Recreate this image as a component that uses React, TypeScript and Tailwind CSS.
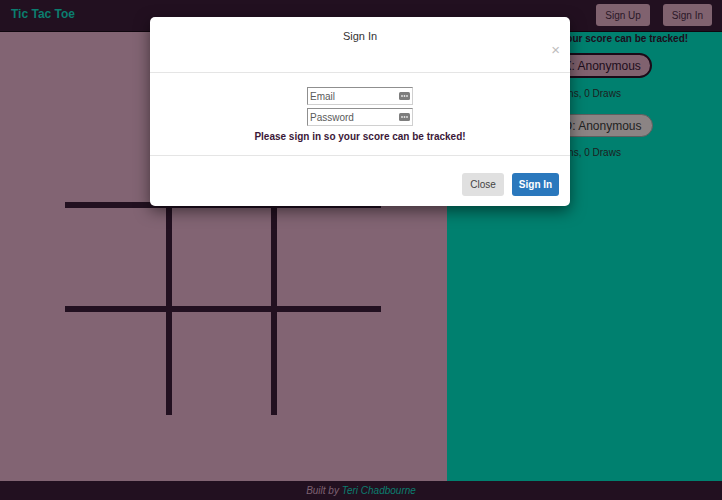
import React from 'react';

const FONT = "font-['Liberation_Sans',Arial,Helvetica,sans-serif]";

function KeyIcon() {
  return (
    <svg width="11" height="8" viewBox="0 0 11 8" aria-hidden="true">
      <rect x="0" y="0" width="11" height="8" rx="1.5" fill="#7d7d7d" />
      <circle cx="3" cy="4" r="0.9" fill="#e6e6e6" />
      <circle cx="5.5" cy="4" r="0.9" fill="#e6e6e6" />
      <circle cx="8" cy="4" r="0.9" fill="#e6e6e6" />
    </svg>
  );
}

function Field({ placeholder, type }: { placeholder: string; type: string }) {
  return (
    <div className="relative w-[106px] h-[18px]">
      <input
        type={type}
        placeholder={placeholder}
        className="block w-full h-full border border-t-[#8f8f8f] border-l-[#8f8f8f] border-r-[#d0d0d0] border-b-[#d0d0d0] bg-white pl-[2px] text-[10px] leading-[16px] text-[#333] placeholder:text-[#5a5a5a] outline-none"
      />
      <span className="absolute right-[3px] top-[5px] flex">
        <KeyIcon />
      </span>
    </div>
  );
}

const CELLS = [
  'border-r-[6px] border-b-[6px]',
  'border-r-[6px] border-b-[6px]',
  'border-b-[6px]',
  'border-r-[6px] border-b-[6px]',
  'border-r-[6px] border-b-[6px]',
  'border-b-[6px]',
  'border-r-[6px]',
  'border-r-[6px]',
  '',
];

export default function App() {
  return (
    <div className={`relative w-full h-[500px] flex flex-col overflow-hidden ${FONT}`}>
      {/* navbar */}
      <header className="h-[32px] shrink-0 bg-[#221020] border-b border-[#0f060e] flex items-start justify-between pl-[11px] pr-[10px]">
        <span className="mt-[7px] text-[12px] leading-[14px] font-bold text-[#0b7d6f]">Tic Tac Toe</span>
        <div className="flex gap-[13px] pt-[4px]">
          <button className="h-[22px] px-[9px] rounded-[3px] bg-[#80626f] text-[10px] text-[#2a1727]">Sign Up</button>
          <button className="h-[22px] px-[9px] rounded-[3px] bg-[#80626f] text-[10px] text-[#2a1727]">Sign In</button>
        </div>
      </header>

      <main className="flex-1 flex min-h-0">
        {/* board */}
        <section className="flex-1 bg-[#826473] flex justify-center pt-[68px]">
          <div className="-ml-[1px] grid grid-cols-[107px_105px_104px] grid-rows-[108px_104px_103px] h-[315px]">
            {CELLS.map((c, i) => (
              <div key={i} className={`border-[#221020] ${c}`} />
            ))}
          </div>
        </section>

        {/* score panel */}
        <aside className="w-[275px] bg-[#00806f] flex flex-col items-center">
          <p className="-ml-[4px] text-[10px] leading-[14px] font-bold text-[#1d0d1b]">Please sign in so your score can be tracked!</p>
          <div className="mt-[7px] -ml-[2px] h-[25px] px-[9px] rounded-full border-2 border-[#1a0a18] bg-[#80626f] flex items-center text-[12px] text-[#1d0d1b]">
            Player X: Anonymous
          </div>
          <p className="mt-[9px] text-[10px] leading-[14px] text-[#1d1d1d]">0 Wins, 0 Draws</p>
          <div className="mt-[13px] -ml-[2px] h-[23px] px-[10px] rounded-full border border-[#5f5f5f] bg-[#8b8484] flex items-center text-[12px] text-[#222]">
            Player O: Anonymous
          </div>
          <p className="mt-[9px] text-[10px] leading-[14px] text-[#1d1d1d]">0 Wins, 0 Draws</p>
        </aside>
      </main>

      <footer className="h-[19px] shrink-0 bg-[#221020] flex items-center justify-center text-[10px] italic">
        <span className="text-[#7e6172]">Built by&nbsp;</span>
        <span className="text-[#0b7d6f]">Teri Chadbourne</span>
      </footer>

      {/* modal */}
      <div className="absolute left-[150px] top-[17px] w-[420px] bg-white rounded-[5px] shadow-[0_5px_15px_rgba(0,0,0,0.5)] flex flex-col">
        <div className="pt-3 pb-[15px] px-[12px] border-b border-[#e5e5e5] flex flex-col">
          <h4 className="text-center text-[11px] leading-[14px] text-[#333]">Sign In</h4>
          <div className="flex justify-end -mr-[2px]">
            <button className="text-[15px] leading-[14px] text-[#bdbdbd]">×</button>
          </div>
        </div>
        <div className="pt-[14px] pb-[11px] flex flex-col items-center">
          <Field placeholder="Email" type="email" />
          <div className="mt-[3px]">
            <Field placeholder="Password" type="password" />
          </div>
          <p className="mt-1 text-[10px] leading-[14px] font-bold text-[#3b1838]">Please sign in so your score can be tracked!</p>
        </div>
        <div className="border-t border-[#e5e5e5] pt-[17px] pb-[10px] pr-[11px] flex justify-end gap-[8px]">
          <button className="h-[23px] w-[42px] rounded-[3px] bg-[#e0e0e0] text-[10px] text-[#444]">Close</button>
          <button className="h-[23px] w-[47px] rounded-[3px] bg-[#2a78bd] text-[10px] font-bold text-white">Sign In</button>
        </div>
      </div>
    </div>
  );
}
